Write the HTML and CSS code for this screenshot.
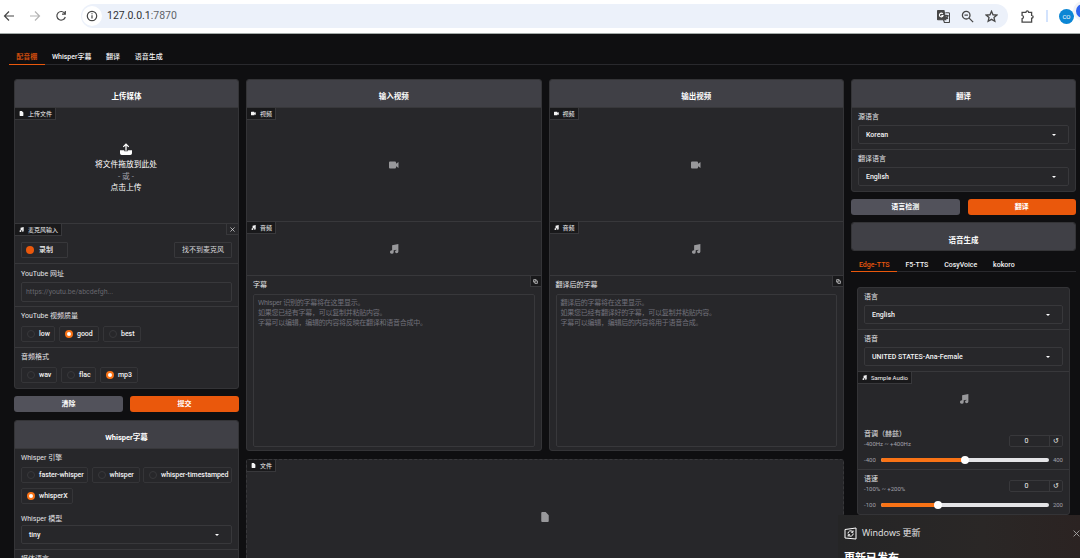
FILE: index.html
```
<!DOCTYPE html>
<html lang="zh-CN">
<head>
  <meta charset="utf-8">
  <title>配音棚</title>
  <meta name="viewport" content="width=device-width, initial-scale=1">
  <link rel="stylesheet" href="styles.css">
</head>
<body>

  <svg class="defs">
    <symbol id="file" viewBox="0 0 12 16"><path d="M1 0h6l5 5v9.500q0 1.500-1.500 1.500h-9q-1.500 0-1.500-1.500v-13q0-1.500 1.500-1.500z"/></symbol>
    <symbol id="video" viewBox="0 0 20 14"><path d="M2 0h10q2 0 2 2v2.500l5-3.500v12l-5-3.500V12q0 2-2 2H2q-2 0-2-2V2q0-2 2-2z"/></symbol>
    <symbol id="music" viewBox="0 0 16 16"><path d="M5 2l10-2v12.500a2.700 2.500 0 1 1-3-2.600V9L7.500 10v3.200a3 2.800 0 1 1-2.500-3z"/></symbol>
    <symbol id="copy" viewBox="0 0 12 12"><path d="M4.500 4.500h6v6h-6zM7.500 4V1.500h-6v6H4" fill="none" stroke="currentColor" stroke-width="1.500"/></symbol>
    <symbol id="close" viewBox="0 0 12 12"><path d="M1 1l10 10M11 1L1 11" fill="none" stroke="currentColor" stroke-width="1.500"/></symbol>
  </svg>

  <div class="browser-bar">
    <svg class="nav-icon" viewBox="0 0 12 12"><path d="M11 6H2M6 1.500L1.500 6 6 10.500"/></svg>
    <svg class="nav-icon nav-off" viewBox="0 0 12 12"><path d="M1 6h9M6 1.500L10.500 6 6 10.500"/></svg>
    <svg class="nav-icon" viewBox="0 0 12 12"><path d="M9.800 3.500A4.300 4.300 0 1 0 10.300 7M10.300 1v3.200H7"/></svg>
    <div class="address">
      <span class="site-info">
        <svg viewBox="0 0 12 12"><circle cx="6" cy="6" r="4.700"/><path d="M6 5.300v3.200M6 3.300v1"/></svg>
      </span>
      <span class="url">127.0.0.1<span class="port">:7870</span></span>
      <svg class="bar-icon translate" viewBox="0 0 14 14">
        <path d="M1.500.5h6l2 10h-8q-1 0-1-1v-8q0-1 1-1z" fill="#474747"/>
        <path d="M9 3h3.500q1 0 1 1v8.500q0 1-1 1H8L7 10.500M8.500 6h4M10.500 5v1M12 6q-.5 2-2.500 3.500M9.500 7q1 2 2.500 2.500"/>
        <path d="M6.200 4.200A2 2 0 1 0 6.500 6H4.700" stroke="#fff"/>
      </svg>
      <svg class="bar-icon" viewBox="0 0 12 12"><circle cx="4.800" cy="4.800" r="3.500"/><path d="M7.500 7.500l3.700 3.700M3.200 4.800h3.200"/></svg>
      <svg class="bar-icon" viewBox="0 0 12 12"><path d="M6 1.200l1.400 3.200 3.500.3-2.600 2.300.8 3.400L6 8.600l-3.100 1.800.8-3.400L1.100 4.700l3.500-.3z"/></svg>
    </div>
    <svg class="bar-icon puzzle" viewBox="0 0 12 12"><path d="M1 2.200h3.500q.3-1.400 1.300-1.400t1.300 1.400h2.700V5q1.400.2 1.400 1.300T9.800 7.600v3.600H1V8q1.300-.3 1.300-1.500T1 5z"/></svg>
    <span class="divider"></span>
    <span class="avatar">CO</span>
    <span class="bubble"></span>
  </div>

  <div class="app">
    <div class="tabs main-tabs">
      <span class="tab active">配音棚</span>
      <span class="tab">Whisper字幕</span>
      <span class="tab">翻译</span>
      <span class="tab">语音生成</span>
    </div>

    <div class="columns">
      <div class="side left">
        <div class="panel">
          <div class="head">上传媒体</div>
          <div class="block upload">
            <span class="tag"><svg><use href="#file"/></svg>上传文件</span>
            <div class="drop">
              <svg viewBox="0 0 14 14"><path d="M0 8.500h5v1h4v-1h5V12q0 2-2 2H2q-2 0-2-2z"/><path d="M7 9V1.500M3.800 4.500L7 1.300l3.200 3.200" fill="none" stroke="#fff" stroke-width="1.500"/></svg>
              <span>将文件拖放到此处</span>
              <span class="or">- 或 -</span>
              <span>点击上传</span>
            </div>
          </div>
          <div class="block mic">
            <span class="tag"><svg><use href="#music"/></svg>麦克风输入</span>
            <span class="corner"><svg><use href="#close"/></svg></span>
            <div class="mic-row">
              <span class="record"><i></i>录制</span>
              <span class="no-mic">找不到麦克风</span>
            </div>
          </div>
          <div class="block url-block">
            <div class="label">YouTube 网址</div>
            <div class="input">https://youtu.be/abcdefgh...</div>
          </div>
          <div class="block quality">
            <div class="label">YouTube 视频质量</div>
            <div class="radios">
              <span class="radio w34"><i></i>low</span>
              <span class="radio w40 on"><i></i>good</span>
              <span class="radio w38"><i></i>best</span>
            </div>
          </div>
          <div class="block format">
            <div class="label">音频格式</div>
            <div class="radios">
              <span class="radio w36"><i></i>wav</span>
              <span class="radio w35"><i></i>flac</span>
              <span class="radio w38 on"><i></i>mp3</span>
            </div>
          </div>
        </div>
        <div class="buttons">
          <div class="btn">清除</div>
          <div class="btn primary">提交</div>
        </div>
        <div class="panel whisper">
          <div class="head">Whisper字幕</div>
          <div class="block engine">
            <div class="label">Whisper 引擎</div>
            <div class="radios">
              <span class="radio w67"><i></i>faster-whisper</span>
              <span class="radio w48"><i></i>whisper</span>
              <span class="radio w89"><i></i>whisper-timestamped</span>
              <span class="radio w52 on"><i></i>whisperX</span>
            </div>
            <div class="label">Whisper 模型</div>
            <div class="select">tiny</div>
          </div>
          <div class="block"><div class="label">媒体语言</div></div>
        </div>
      </div>

      <div class="center">
        <div class="videos">
          <div class="panel">
            <div class="head">输入视频</div>
            <div class="block video">
              <span class="tag"><svg><use href="#video"/></svg>视频</span>
              <svg class="big"><use href="#video"/></svg>
            </div>
            <div class="block audio">
              <span class="tag"><svg><use href="#music"/></svg>音频</span>
              <svg class="big"><use href="#music"/></svg>
            </div>
            <div class="block subtitle">
              <span class="corner"><svg><use href="#copy"/></svg></span>
              <div class="label">字幕</div>
              <div class="textarea">Whisper 识别的字幕将在这里显示。<br>如果您已经有字幕，可以复制并粘贴内容。<br>字幕可以编辑，编辑的内容将反映在翻译和语音合成中。</div>
            </div>
          </div>
          <div class="panel">
            <div class="head">输出视频</div>
            <div class="block video">
              <span class="tag"><svg><use href="#video"/></svg>视频</span>
              <svg class="big"><use href="#video"/></svg>
            </div>
            <div class="block audio">
              <span class="tag"><svg><use href="#music"/></svg>音频</span>
              <svg class="big"><use href="#music"/></svg>
            </div>
            <div class="block subtitle">
              <span class="corner"><svg><use href="#copy"/></svg></span>
              <div class="label">翻译后的字幕</div>
              <div class="textarea">翻译后的字幕将在这里显示。<br>如果您已经有翻译好的字幕，可以复制并粘贴内容。<br>字幕可以编辑，编辑后的内容将用于语音合成。</div>
            </div>
          </div>
        </div>
        <div class="files">
          <span class="tag"><svg><use href="#file"/></svg>文件</span>
          <svg class="big"><use href="#file"/></svg>
        </div>
      </div>

      <div class="side right">
        <div class="panel">
          <div class="head">翻译</div>
          <div class="block lang">
            <div class="label">源语言</div>
            <div class="select">Korean</div>
          </div>
          <div class="block lang">
            <div class="label">翻译语言</div>
            <div class="select">English</div>
          </div>
        </div>
        <div class="buttons">
          <div class="btn">语言检测</div>
          <div class="btn primary">翻译</div>
        </div>
        <div class="panel speech"><div class="head">语音生成</div></div>
        <div class="tabs tts-tabs">
          <span class="tab active">Edge-TTS</span>
          <span class="tab">F5-TTS</span>
          <span class="tab">CosyVoice</span>
          <span class="tab">kokoro</span>
        </div>
        <div class="panel tts">
          <div class="block lang">
            <div class="label">语言</div>
            <div class="select">English</div>
          </div>
          <div class="block lang">
            <div class="label">语音</div>
            <div class="select">UNITED STATES-Ana-Female</div>
          </div>
          <div class="block sample">
            <span class="tag"><svg><use href="#music"/></svg>Sample Audio</span>
            <svg class="big"><use href="#music"/></svg>
          </div>
          <div class="slider-block">
            <div class="slider-top">
              <div>
                <div class="label">音调（赫兹）</div>
                <div class="info">-400Hz ~ +400Hz</div>
              </div>
              <div class="number"><span>0</span><b>↺</b></div>
            </div>
            <div class="slider">
              <span class="min">-400</span>
              <div class="track"><div class="fill" style="width: 50%"></div></div>
              <span>400</span>
            </div>
          </div>
          <div class="slider-block lined">
            <div class="slider-top">
              <div>
                <div class="label">语速</div>
                <div class="info">-100% ~ +200%</div>
              </div>
              <div class="number"><span>0</span><b>↺</b></div>
            </div>
            <div class="slider">
              <span class="min">-100</span>
              <div class="track"><div class="fill" style="width: 34%"></div></div>
              <span>200</span>
            </div>
          </div>
        </div>
      </div>
    </div>
  </div>

  <div class="toast">
    <div class="toast-top">
      <svg class="update" viewBox="0 0 13 13"><path d="M1 2.500L12 1v11L1 11zM4 6.500a2.700 2.700 0 0 1 4.500-2M9 3.500v1.800H7.200M9.200 6.500a2.700 2.700 0 0 1-4.500 2M4.200 9.500V7.700H6"/></svg>
      <span>Windows 更新</span>
      <svg class="toast-close"><use href="#close"/></svg>
    </div>
    <div class="toast-title">更新已发布</div>
  </div>

</body>
</html>
```

FILE: styles.css
```
* {
  box-sizing: border-box;
}

body {
  margin: 0;
  height: 558px;
  overflow: hidden;
  background-color: #0f0f11;
  color: #f4f4f5;
  font-family: Roboto, "Noto Sans CJK SC", sans-serif;
  font-size: 7px;
  line-height: 10px;
}

svg {
  display: block;
  fill: currentColor;
}

.defs {
  position: absolute;
  width: 0;
  height: 0;
}

/* browser bar */

.browser-bar {
  display: flex;
  align-items: center;
  height: 34px;
  padding: 0 0 1px 3px;
  background-color: white;
  border-bottom: 1px solid #a3aaa8;
  overflow: hidden;
}

.browser-bar svg {
  fill: none;
  stroke: #474747;
  stroke-width: 1.2;
  flex-shrink: 0;
}

.nav-icon {
  width: 12px;
  height: 12px;
  margin-right: 14px;
}

.browser-bar .nav-off {
  stroke: #b4b4b4;
}

.address {
  display: flex;
  align-items: center;
  flex-shrink: 0;
  width: 927px;
  height: 24px;
  padding: 0 10px 0 1px;
  border-radius: 12px;
  background-color: #ecf1fa;
}

.site-info {
  display: flex;
  align-items: center;
  justify-content: center;
  width: 20px;
  height: 20px;
  border-radius: 10px;
  background-color: white;
}

.site-info svg {
  width: 12px;
  height: 12px;
}

.url {
  flex: 1;
  margin-left: 5px;
  font-size: 10.5px;
  line-height: 14px;
  color: #303134;
}

.port {
  color: #5f6368;
}

.bar-icon {
  width: 13px;
  height: 13px;
  margin-left: 11px;
}

.puzzle {
  margin-left: 13px;
}

.divider {
  width: 2px;
  height: 12px;
  margin: 0 11px 0 12px;
  background-color: #d3e3fd;
  flex-shrink: 0;
}

.avatar {
  width: 15px;
  height: 15px;
  border-radius: 8px;
  background-color: #0b86d4;
  color: white;
  font-size: 6px;
  line-height: 15px;
  text-align: center;
  flex-shrink: 0;
}

.bubble {
  width: 20px;
  height: 20px;
  margin: -10px 0 0 -1px;
  border: 3px solid #f1f3f6;
  border-radius: 50%;
  background-color: #2f64f0;
  flex-shrink: 0;
}

/* tabs */

.tabs {
  display: flex;
  border-bottom: 1px solid #29292d;
  font-weight: 500;
}

.tab {
  text-align: center;
  white-space: nowrap;
}

.tab.active {
  color: #ea580c;
  border-bottom: 1px solid #ea580c;
  margin-bottom: -1px;
}

.main-tabs {
  height: 18px;
  margin: 13px 0 0 9px;
}

.main-tabs .tab {
  height: 18px;
  padding: 5px 7.3px 0;
}

/* columns */

.columns {
  display: flex;
  gap: 7px;
  padding: 14px 4px 0 14px;
}

.side {
  width: 225px;
  flex-shrink: 0;
}

.center {
  width: 598px;
}

.videos {
  display: flex;
  gap: 7px;
}

.videos .panel {
  flex: 1;
}

.panel {
  border: 1px solid #343437;
  border-radius: 3px;
  background-color: #27272a;
  overflow: hidden;
}

.head {
  height: 27px;
  padding-top: 12px;
  background-color: #404046;
  color: white;
  font-size: 7.5px;
  font-weight: 700;
  text-align: center;
}

.block {
  position: relative;
  border-top: 1px solid #38383b;
  padding: 0 6px;
}

.label {
  height: 10px;
  white-space: nowrap;
  color: #e4e4e7;
}

.tag {
  position: absolute;
  top: 0;
  left: 0;
  display: flex;
  align-items: center;
  height: 12px;
  padding: 0 3px 0 4px;
  border: solid #38383b;
  border-width: 0 1px 1px 0;
  background-color: #19191b;
  font-size: 6px;
  white-space: nowrap;
}

.tag svg {
  width: 5px;
  height: 5px;
  margin-right: 4px;
}

.corner {
  position: absolute;
  top: 0;
  right: 0;
  display: flex;
  align-items: center;
  justify-content: center;
  width: 11px;
  height: 11px;
  border: solid #38383b;
  border-width: 0 0 1px 1px;
}

.corner svg {
  width: 5px;
  height: 5px;
}

.mic .corner {
  width: 12px;
}

.subtitle .corner {
  background-color: #19191b;
}

.big {
  width: 10px;
  height: 10px;
  color: #98989b;
}

/* upload column */

.upload {
  height: 116px;
}

.drop {
  display: flex;
  flex-direction: column;
  align-items: center;
  padding: 35px 1px 0 0;
  color: white;
  font-size: 7.75px;
  line-height: 11.6px;
}

.drop svg {
  width: 12px;
  height: 12px;
  margin-bottom: 4px;
}

.or {
  color: #a1a1aa;
}

.mic {
  height: 40px;
}

.mic-row {
  display: flex;
  justify-content: space-between;
  padding-top: 18px;
}

.record,
.no-mic {
  display: flex;
  align-items: center;
  height: 16px;
  border: 1px solid #38383b;
  border-radius: 1px;
}

.record {
  width: 47px;
  padding-left: 4px;
  font-weight: 500;
}

.record i {
  width: 8px;
  height: 8px;
  margin-right: 5px;
  border-radius: 50%;
  background-color: #ea580c;
}

.no-mic {
  width: 58px;
  justify-content: center;
  color: #d4d4d8;
}

.url-block {
  height: 43px;
  padding-top: 5px;
}

.input {
  height: 20px;
  margin-top: 3px;
  padding: 4px;
  border: 1px solid #38383b;
  border-radius: 2px;
  color: #66666d;
}

.quality {
  height: 41px;
  padding-top: 4px;
}

.format {
  height: 41px;
  padding-top: 4px;
}

.radios {
  display: flex;
  flex-wrap: wrap;
  gap: 5px 4px;
  margin-top: 4px;
}

.quality .radios,
.format .radios {
  margin-top: 5px;
}

.radio {
  display: flex;
  align-items: center;
  height: 16px;
  padding-left: 5px;
  border: 1px solid #353538;
  border-radius: 2px;
  font-weight: 500;
  letter-spacing: -0.05px;
  white-space: nowrap;
}

.radio i {
  width: 8px;
  height: 8px;
  margin-right: 4px;
  border: 1px solid #38383b;
  border-radius: 50%;
}

.radio.on i {
  border: 2.5px solid #f97316;
  background-color: white;
}

.w34 { width: 34px; }
.w35 { width: 35px; }
.w36 { width: 36px; }
.w38 { width: 38px; }
.w40 { width: 40px; }
.w48 { width: 48px; }
.w52 { width: 52px; }
.w67 { width: 67px; }
.w89 { width: 89px; }

.buttons {
  display: flex;
  gap: 8px;
  margin: 7px 0 8px;
}

.left .buttons {
  gap: 7px;
}

.right .buttons {
  margin-bottom: 7px;
}

.btn {
  flex: 1;
  height: 16px;
  border-radius: 3px;
  background-color: #52525b;
  color: white;
  font-weight: 700;
  line-height: 16px;
  text-align: center;
}

.btn.primary {
  background-color: #ea580c;
}

.engine {
  height: 101px;
  padding-top: 4px;
}

.whisper .radios {
  column-gap: 3.5px;
  margin-bottom: 10px;
}

.select {
  display: flex;
  align-items: center;
  justify-content: space-between;
  height: 19px;
  padding: 0 12px 0 7px;
  border: 1px solid #38383b;
  border-radius: 2px;
  font-weight: 500;
}

.select::after {
  content: "";
  border: 2.5px solid transparent;
  border-top-color: white;
  border-bottom-width: 0;
}

.whisper .select {
  margin-top: 1px;
}

.whisper .block:last-child {
  padding-top: 4px;
  height: 20px;
}

/* video columns */

.video,
.audio,
.files {
  display: flex;
  align-items: center;
  justify-content: center;
}

.video {
  height: 114px;
}

.audio {
  height: 54px;
}

.subtitle {
  height: 175px;
  padding: 4px 6px;
}

.textarea {
  height: 153px;
  margin-top: 4px;
  padding: 4px;
  border: 1px solid #38383b;
  border-radius: 2px;
  color: #71717a;
  letter-spacing: -0.25px;
  line-height: 9.8px;
}

.files {
  position: relative;
  height: 116px;
  margin-top: 8px;
  border: 1px dashed #38383b;
  border-radius: 3px;
  background-color: #27272a;
}

/* translate and speech column */

.right .lang {
  height: 42px;
  padding-top: 4px;
}

.right .lang .select {
  margin-top: 3px;
}

.speech {
  background-color: #404046;
}

.speech .head {
  padding-top: 13px;
}

.tts-tabs {
  height: 21px;
}

.tts-tabs .tab {
  height: 21px;
  padding: 9px 7.9px 0;
}

.tts {
  margin: 15px 6px 0;
}

.tts .block:first-child {
  border-top: 0;
  height: 41px;
}

.sample {
  height: 54px;
  display: flex;
  align-items: center;
  justify-content: center;
}

.slider-block {
  height: 44px;
  padding: 4px 6px 0;
}

.lined {
  height: 45px;
  border-top: 1px solid #38383b;
}

.slider-top {
  display: flex;
  justify-content: space-between;
  height: 26px;
}

.info {
  color: #a1a1aa;
  font-size: 6px;
}

.number {
  display: flex;
  width: 54px;
  height: 12px;
  margin-top: 6px;
  border: 1px solid #38383b;
  border-radius: 2px;
  text-align: center;
}

.number span {
  flex: 1;
  padding-right: 6px;
}

.number b {
  width: 13px;
  border-left: 1px solid #38383b;
  font-weight: 400;
}

.slider {
  display: flex;
  align-items: center;
  gap: 4px;
  color: #a1a1aa;
  font-size: 6px;
}

.min {
  width: 13px;
}

.track {
  flex: 1;
  height: 4px;
  border-radius: 2px;
  background-color: #e4e4e7;
}

.fill {
  position: relative;
  height: 4px;
  border-radius: 2px;
  background-color: #f97316;
}

.fill::after {
  content: "";
  position: absolute;
  top: -2px;
  right: -4px;
  width: 8px;
  height: 8px;
  border-radius: 50%;
  background-color: white;
}

/* system notification */

.toast {
  position: absolute;
  top: 515px;
  right: 0;
  width: 242px;
  height: 43px;
  padding: 11px 0 0 6px;
  overflow: hidden;
  background: linear-gradient(90deg, #252526, #2a2726 60%, #2b2322);
  color: #e8e8e8;
  font-family: "Open Sans", "Noto Sans CJK SC", sans-serif;
  font-size: 9px;
}

.toast-top {
  display: flex;
  align-items: center;
  height: 14px;
}

.update {
  width: 13px;
  height: 13px;
  margin-right: 5px;
  fill: none;
  stroke: white;
}

.toast-close {
  width: 7px;
  height: 7px;
  margin-left: auto;
  color: #aaa;
}

.toast-title {
  margin-top: 11px;
  color: white;
  font-size: 11px;
  font-weight: 700;
  line-height: 14px;
}
```
